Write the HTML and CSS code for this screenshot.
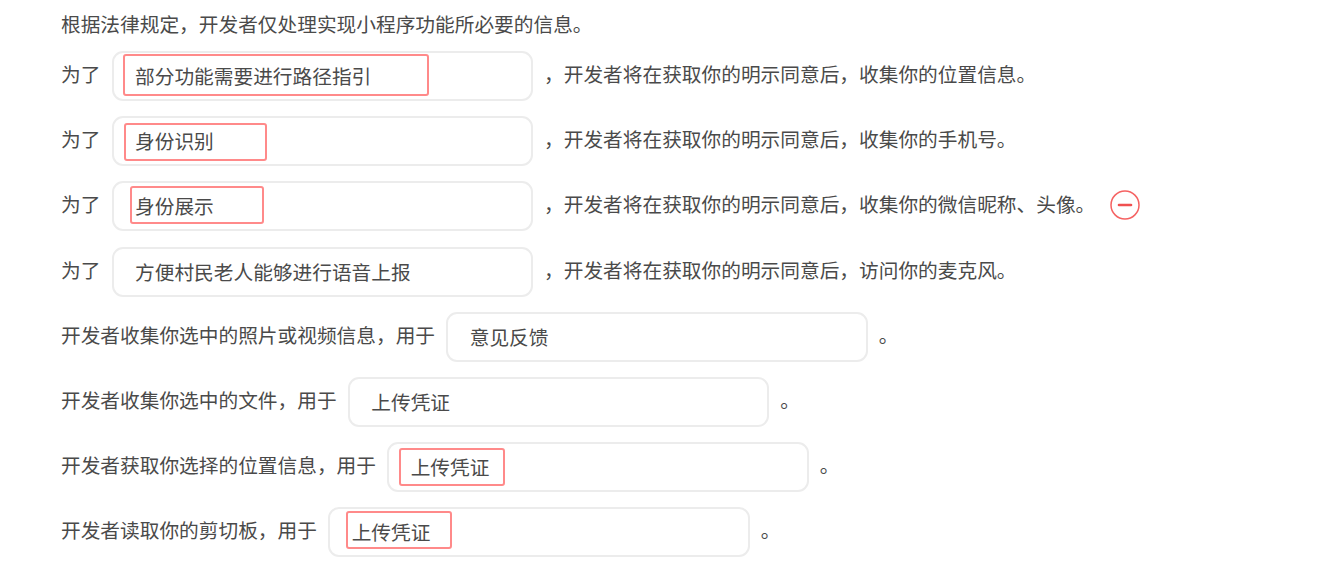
FILE: index.html
```html
<!DOCTYPE html>
<html lang="zh-CN">
<head>
  <meta charset="UTF-8">
  <meta name="viewport" content="width=device-width, initial-scale=1.0">
  <title>用户隐私保护指引</title>
  <link rel="stylesheet" href="styles.css">
</head>
<body>
  <div class="privacy-form">
    <p class="intro">根据法律规定，开发者仅处理实现小程序功能所必要的信息。</p>

    <div class="form-row">
      <span class="label">为了</span>
      <div class="field"><span class="mark mark-route"></span>部分功能需要进行路径指引</div>
      <span class="suffix">，开发者将在获取你的明示同意后，收集你的位置信息。</span>
    </div>
    <div class="form-row">
      <span class="label">为了</span>
      <div class="field"><span class="mark mark-identify"></span>身份识别</div>
      <span class="suffix">，开发者将在获取你的明示同意后，收集你的手机号。</span>
    </div>
    <div class="form-row">
      <span class="label">为了</span>
      <div class="field"><span class="mark mark-display"></span>身份展示</div>
      <span class="suffix">，开发者将在获取你的明示同意后，收集你的微信昵称、头像。</span>
      <svg class="remove-icon" width="30" height="30" viewBox="0 0 30 30">
        <circle cx="15" cy="15" r="14" fill="none" stroke="#f56262" stroke-width="1.5"/>
        <line x1="9" y1="15" x2="21" y2="15" stroke="#f05050" stroke-width="2.6" stroke-linecap="round"/>
      </svg>
    </div>
    <div class="form-row">
      <span class="label">为了</span>
      <div class="field">方便村民老人能够进行语音上报</div>
      <span class="suffix">，开发者将在获取你的明示同意后，访问你的麦克风。</span>
    </div>
    <div class="form-row">
      <span class="label">开发者收集你选中的照片或视频信息，用于</span>
      <div class="field">意见反馈</div>
      <span class="suffix">。</span>
    </div>
    <div class="form-row">
      <span class="label">开发者收集你选中的文件，用于</span>
      <div class="field">上传凭证</div>
      <span class="suffix">。</span>
    </div>
    <div class="form-row">
      <span class="label">开发者获取你选择的位置信息，用于</span>
      <div class="field"><span class="mark mark-location"></span>上传凭证</div>
      <span class="suffix">。</span>
    </div>
    <div class="form-row">
      <span class="label">开发者读取你的剪切板，用于</span>
      <div class="field"><span class="mark mark-clipboard"></span>上传凭证</div>
      <span class="suffix">。</span>
    </div>
  </div>
</body>
</html>
```

FILE: styles.css
```css
body {
  font-family: "Liberation Sans", "Noto Sans CJK SC", sans-serif;
  background-color: white;
  margin: 0;
  padding: 0;
  color: #4a4a4a;
  overflow: hidden;
}
.privacy-form {
  display: flex;
  flex-direction: column;
  gap: 15.2px;
  padding: 12px 0 0 61px;
  font-size: 19.7px;
  white-space: nowrap;
}
.intro {
  margin: 0 0 -2.2px 0;
  line-height: 26px;
}
.form-row {
  display: flex;
  align-items: center;
  height: 50px;
}
.label {
  line-height: 26px;
  margin-bottom: 2px;
}
.field {
  position: relative;
  box-sizing: border-box;
  width: 421.5px;
  height: 50px;
  margin-left: 11.2px;
  padding-left: 21.5px;
  border: 2px solid #ececec;
  border-radius: 11px;
  background-color: white;
  line-height: 48px;
}
.suffix {
  margin-left: 11px;
  line-height: 26px;
  margin-bottom: 2px;
}
.mark {
  position: absolute;
  box-sizing: border-box;
  height: 38px;
  border: 2px solid #ff8a8a;
  border-radius: 3px;
}
.mark-route {
  left: 9px;
  top: 1px;
  width: 306px;
  height: 42px;
}
.mark-identify {
  left: 10.5px;
  top: 5px;
  width: 143px;
}
.mark-display {
  left: 16.5px;
  top: 2.5px;
  width: 134px;
}
.mark-location {
  left: 10px;
  top: 3.5px;
  width: 106px;
}
.mark-clipboard {
  left: 15.5px;
  top: 1.5px;
  width: 106px;
}
.remove-icon {
  margin-left: 14.5px;
  margin-bottom: 2px;
}
```
